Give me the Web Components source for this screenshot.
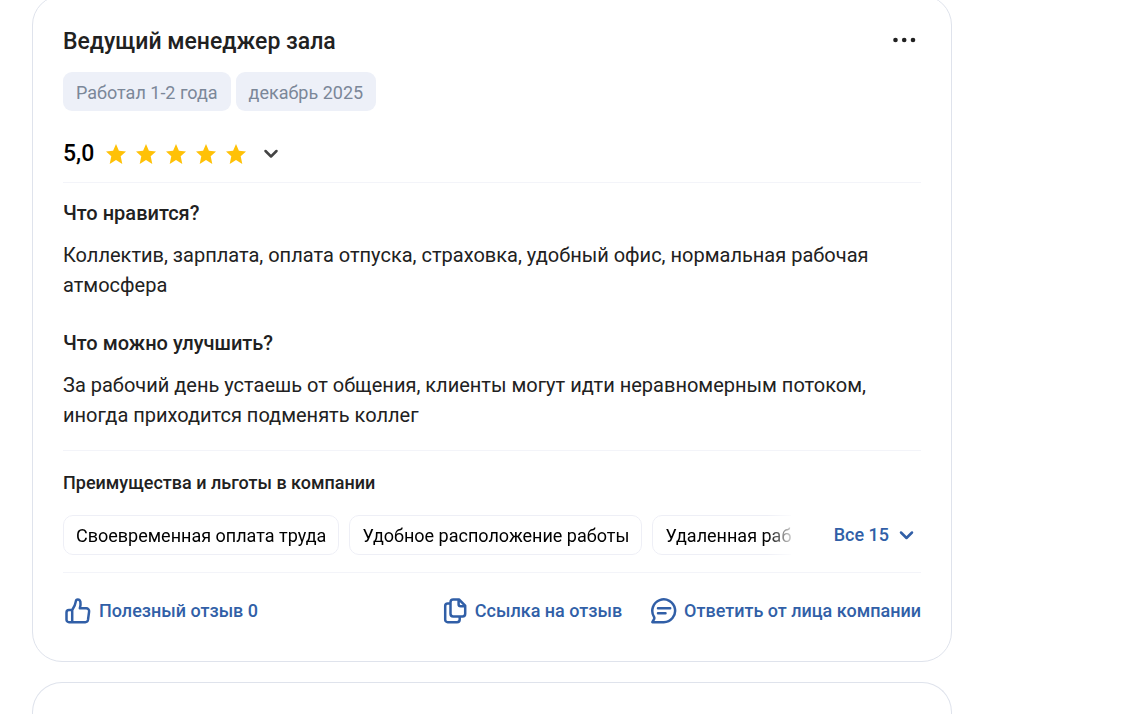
<!DOCTYPE html>
<html lang="ru">
<head>
<meta charset="utf-8">
<meta name="viewport" content="width=device-width, initial-scale=1">
<title>Отзывы сотрудников</title>
<style>
  body {
    margin: 0;
    background: #fff;
    color: #212121;
    font-family: Roboto, "Liberation Sans", sans-serif;
    --line: #f3f4f9;
    --frame: #dfe3ec;
    --link: #315fa7;
  }
</style>
</head>
<body>
<review-feed>
  <review-card>
    <review-title slot="head">Ведущий менеджер зала</review-title>
    <tag-list slot="head">
      <tag-chip>Работал 1-2 года</tag-chip>
      <tag-chip>декабрь 2025</tag-chip>
    </tag-list>
    <star-rating slot="head" value="5">5,0</star-rating>
    <review-answer question="Что нравится?">Коллектив, зарплата, оплата отпуска, страховка, удобный офис, нормальная рабочая атмосфера</review-answer>
    <review-answer question="Что можно улучшить?">За рабочий день устаешь от общения, клиенты могут идти неравномерным потоком, иногда приходится подменять коллег</review-answer>
    <benefit-list slot="benefits" count="15">
      <benefit-chip>Своевременная оплата труда</benefit-chip>
      <benefit-chip>Удобное расположение работы</benefit-chip>
      <benefit-chip>Удаленная работа</benefit-chip>
    </benefit-list>
    <review-actions slot="actions"></review-actions>
  </review-card>
  <review-card empty></review-card>
</review-feed>

<script>
const define = (name, html, setup) => {
  const template = document.createElement('template');
  template.innerHTML = html;
  customElements.define(name, class extends HTMLElement {
    constructor() {
      super();
      this.attachShadow({ mode: 'open' }).append(template.content.cloneNode(true));
    }
    connectedCallback() { if (setup) setup(this, this.shadowRoot); }
  });
};

define('review-feed', `
<style>
  :host { display: flex; flex-direction: column; gap: 20px; box-sizing: border-box; max-width: 920px; min-height: calc(100vh + 5px); margin: -5px 32px 0; }
</style><slot></slot>`);

define('review-card', `
<style>
  :host { display: block; box-sizing: border-box; border: 1px solid var(--frame); border-radius: 30px; padding: 30px; background: #fff; }
  :host([empty]) { flex: 1; padding: 0; border-bottom: 0; border-radius: 30px 30px 0 0; }
  :host([empty]) article { display: none; }
  .head { border-bottom: 1px solid var(--line); }
  .body { display: flex; flex-direction: column; gap: 28px; padding: 15px 0 20px; }
  .benefits, .actions { border-top: 1px solid var(--line); }
  .benefits { padding: 20px 0 17px; }
  .actions { padding: 24px 0 6px; }
</style>
<article>
  <div class="head"><slot name="head"></slot></div>
  <div class="body"><slot></slot></div>
  <div class="benefits"><slot name="benefits"></slot></div>
  <div class="actions"><slot name="actions"></slot></div>
</article>`);

define('review-title', `
<style>
  :host { display: flex; align-items: flex-start; justify-content: space-between; }
  h2 { margin: 0; font-size: 23px; line-height: 32px; font-weight: 500; }
  button { display: flex; border: 0; background: none; padding: 6px 4px; cursor: pointer; color: #212121; }
</style>
<h2><slot></slot></h2>
<button type="button" aria-label="Ещё"><svg width="26" height="18" viewBox="0 0 26 18" fill="currentColor"><circle cx="4.500" cy="8" r="2.300"/><circle cx="13.200" cy="8" r="2.300"/><circle cx="22" cy="8" r="2.300"/></svg></button>`);

define('tag-list', `
<style>:host { display: flex; flex-wrap: wrap; gap: 5px; margin-top: 14px; }</style><slot></slot>`);

define('tag-chip', `
<style>
  :host { display: block; padding: 8px 13px 6px; border-radius: 9px; background: #edf0f8; color: #7b8798; font-size: 18px; line-height: 25px; }
</style><slot></slot>`);

define('star-rating', `
<style>
  :host { display: flex; align-items: center; padding: 27px 0 13px; font-size: 23px; line-height: 31px; color: #000; }
  .stars { display: flex; gap: 10px; margin: 0 15px 0 12px; color: #ffc107; }
  svg { display: block; }
  .num { font-weight: 500; }
  button { border: 0; background: none; padding: 0; color: #444; cursor: pointer; }
</style>
<span class="num"><slot></slot></span>
<span class="stars" role="img"></span>
<button type="button" aria-label="Подробнее об оценке"><svg width="20" height="20" viewBox="0 0 20 20" fill="none" stroke="currentColor" stroke-width="2.500" stroke-linecap="round" stroke-linejoin="round"><path d="M4.500 7l5.500 5.500L15.500 7"/></svg></button>`,
(host, root) => {
  const n = Number(host.getAttribute('value'));
  const stars = root.querySelector('.stars');
  stars.setAttribute('aria-label', `${n} из 5`);
  stars.innerHTML = '<svg width="20" height="20" viewBox="0 0 20 20" fill="currentColor"><path d="M10 0l2.900 6.700 7.100.7-5.300 4.900 1.600 7.700L10 16.100 3.700 20l1.600-7.700L0 7.400l7.100-.7z"/></svg>'.repeat(n);
});

define('review-answer', `
<style>
  :host { display: block; }
  h3 { margin: 0 0 12px; font-size: 20px; line-height: 30px; font-weight: 500; }
  p { margin: 0; font-size: 20px; line-height: 30px; }
</style>
<h3></h3><p><slot></slot></p>`,
(host, root) => { root.querySelector('h3').textContent = host.getAttribute('question'); });

define('benefit-list', `
<style>
  :host { display: block; }
  h4 { margin: 0 0 20px; font-size: 18px; line-height: 24px; font-weight: 500; }
  .row { display: flex; align-items: center; gap: 43px; }
  .list { display: flex; flex: 1; min-width: 0; gap: 10px; overflow: hidden;
    -webkit-mask-image: linear-gradient(to right, #000 calc(100% - 24px), rgba(0,0,0,.2));
    mask-image: linear-gradient(to right, #000 calc(100% - 24px), rgba(0,0,0,.2)); }
  button { display: flex; align-items: center; gap: 8px; border: 0; background: none; padding: 0 4px 0 0; font: 500 18px/24px Roboto, "Liberation Sans", sans-serif; color: var(--link); cursor: pointer; }
</style>
<h4>Преимущества и льготы в компании</h4>
<div class="row">
  <div class="list"><slot></slot></div>
  <button type="button"><span></span><svg width="20" height="20" viewBox="0 0 20 20" fill="none" stroke="currentColor" stroke-width="2.500" stroke-linecap="round" stroke-linejoin="round"><path d="M4 7.500l5.500 5.500L15 7.500"/></svg></button>
</div>`,
(host, root) => { root.querySelector('button span').textContent = `Все ${host.getAttribute('count')}`; });

define('benefit-chip', `
<style>
  :host { display: block; flex: none; padding: 8px 12px 6px; border: 1px solid #eeeff6; border-radius: 10px; color: #000; font-size: 18px; line-height: 24px; white-space: nowrap; }
</style><slot></slot>`);

define('review-actions', `
<style>
  :host { display: flex; justify-content: space-between; gap: 20px; color: var(--link); }
  .group { display: flex; gap: 26px; }
  button, a { display: flex; align-items: center; gap: 6px; border: 0; background: none; padding: 0; font: 500 18px/26px Roboto, "Liberation Sans", sans-serif; color: inherit; text-decoration: none; white-space: nowrap; cursor: pointer; }
  svg { display: block; fill: none; stroke: currentColor; stroke-width: 2.500; stroke-linejoin: round; stroke-linecap: round; }
</style>
<button type="button">
  <svg width="30" height="28" viewBox="0 0 30 28"><path d="M9.200 13H6a2.500 2.500 0 0 0-2.500 2.500v7.200A2.500 2.500 0 0 0 6 25.200h16.200a2.800 2.800 0 0 0 2.800-2.300l1.100-8.300a2.900 2.900 0 0 0-2.900-3.300H16.800c.7-2.200 1-4.300.6-6.400C17 3.300 16 2.500 14.800 2.500c-1.300 0-1.900.8-2.100 2.300-.4 3.500-1.700 5.500-3.500 8.200zM9.200 13v12.200"/></svg>
  <span>Полезный отзыв 0</span>
</button>
<div class="group">
  <a href="#review">
    <svg width="28" height="28" viewBox="0 0 28 28"><path d="M18 2.500h-5.800a2.700 2.700 0 0 0-2.700 2.700v11.600a2.700 2.700 0 0 0 2.700 2.700h9.300a2.700 2.700 0 0 0 2.700-2.700V8.700zM17.600 2.800v4.400a2 2 0 0 0 2 2H24M9.500 6.500H6.700a2.500 2.500 0 0 0-2.500 2.500v13.700a2.500 2.500 0 0 0 2.500 2.500H16a2.700 2.700 0 0 0 2.700-2.700v-3"/></svg>
    <span>Ссылка на отзыв</span>
  </a>
  <button type="button">
    <svg width="30" height="28" viewBox="0 0 30 28"><path d="M4.400 25.200h11.400A11.400 11.400 0 1 0 5.900 19.600c.5.900.6 1.500.3 2.300zM10 11.200h12.200M10 16.300h7.500"/></svg>
    <span>Ответить от лица компании</span>
  </button>
</div>`);
</script>
</body>
</html>
